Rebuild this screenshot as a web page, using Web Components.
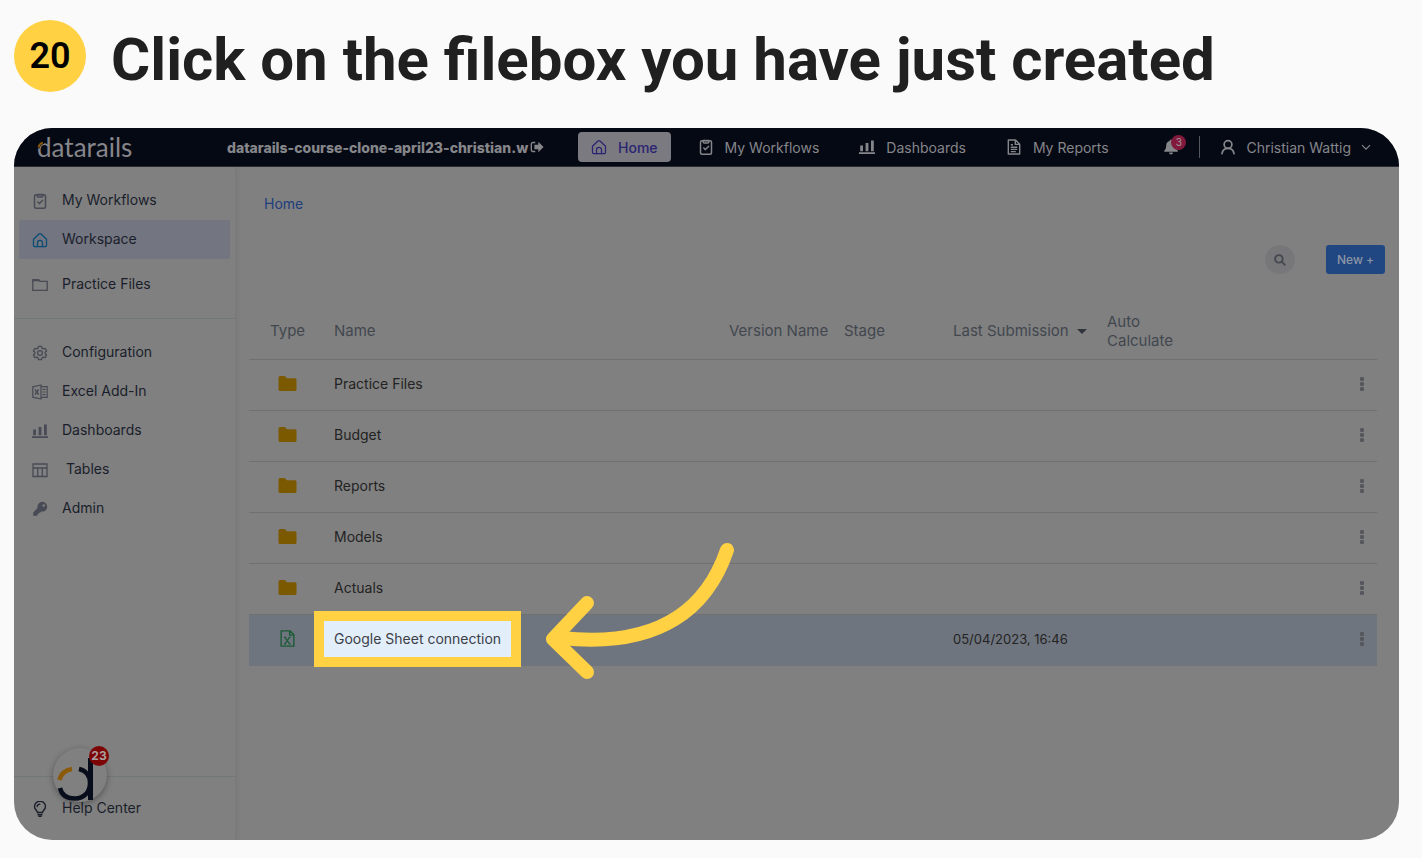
<!DOCTYPE html>
<html lang="en">
<head>
<meta charset="utf-8">
<title>Click on the filebox you have just created</title>
<style>
  body {
    margin: 0;
    box-sizing: border-box;
    min-height: 100vh;
    padding: 20px 23px 18px 14px;
    display: flex;
    flex-direction: column;
    gap: 36px;
    background: #fafafa;
    font-family: Inter, "Open Sans", sans-serif;
    font-size: 14px;
  }
</style>
</head>
<body>
<step-heading number="20">Click on the filebox you have just created</step-heading>
<app-frame>
  <top-bar slot="top"></top-bar>
  <side-bar slot="side"></side-bar>
  <work-space></work-space>
</app-frame>

<script>
const ICONS = {
  clipboard: ['0 0 16 16', '<g fill="none" stroke="currentColor" stroke-width="1.5" stroke-linejoin="round" stroke-linecap="round"><rect x="2.5" y="1.8" width="11" height="13.4" rx="1.5"/><path d="M5.2 1.5h5.6v1.6a1 1 0 0 1-1 1H6.200a1 1 0 0 1-1-1zM5.800 9l1.600 1.600L10.500 7.400"/></g>'],
  home: ['0 0 16 16', '<g fill="none" stroke="currentColor" stroke-width="1.3" stroke-linejoin="round" stroke-linecap="round"><path d="M1.500 7.200 7 2.100a1.500 1.500 0 0 1 2 0l5.500 5.100v6a1.500 1.500 0 0 1-1.500 1.500H3a1.500 1.500 0 0 1-1.500-1.500z"/><path d="M5.500 14.500v-3.700a2.500 2.500 0 0 1 5 0v3.700"/></g>'],
  folderLine: ['0 0 16 16', '<path d="M.8 3.500V13.300h14.400V4.300H8L6.800 2.800H.8z" fill="none" stroke="currentColor" stroke-width="1.300"/><path d="M.5 2.300h6.500l1 2H.5z" fill="currentColor"/>'],
  gear: ['0 0 24 24', '<g fill="none" stroke="currentColor" stroke-width="2"><path stroke-linejoin="round" d="M9.700 2h4.600l.7 2.900 1.700 1 2.900-.9 2.300 4-2.200 2v2l2.200 2-2.300 4-2.900-.9-1.700 1-.7 2.900H9.700L9 19.100l-1.700-1-2.900.9-2.300-4 2.200-2v-2l-2.200-2 2.300-4 2.900.9 1.700-1z"/><circle cx="12" cy="12" r="3.600"/></g>'],
  excel: ['0 0 16 16', '<g fill="none" stroke="currentColor" stroke-width="1.200"><path d="M.8 2.800 9 1v14L.8 13.200z"/><path d="M9 2.600h6.200v10.800H9M10.500 5.300h3M10.500 8h3M10.500 10.700h3"/><path d="m3 5.500 3.600 5M6.600 5.500 3 10.500" stroke-width="1.400"/></g>'],
  bars: ['0 0 16 16', '<path fill="currentColor" d="M0 13.200h16V15H0zM1.200 6.500h2.800v5.800H1.200zM6.600 4h2.800v8.300H6.600zM12 1.500h2.800v10.800H12z"/>'],
  grid: ['0 0 16 16', '<path d="M1 2h14v12.500H1zM1 6h14M5.700 6v8.500M10.300 6v8.500" fill="none" stroke="currentColor" stroke-width="1.300"/>'],
  key: ['0 0 16 16', '<path fill="currentColor" fill-rule="evenodd" d="M10.300.8a4.900 4.900 0 1 1-1 9.700L8 11.800H6.700v1.400H5.300v1.500H1.200v-3.300l4.400-4.600A4.900 4.900 0 0 1 10.300.8zm1.400 2.400a1.300 1.300 0 1 0 0 2.600 1.300 1.300 0 0 0 0-2.600z"/>'],
  bulb: ['0 0 16 16', '<g fill="none" stroke="currentColor" stroke-width="1.400" stroke-linecap="round"><path d="M5.500 11.500c0-2-3-2.800-3-6a5.500 5.200 0 0 1 11 0c0 3.200-3 4-3 6zM6 13.800h4M7 15.500h2M5.200 5.500a2.800 2.600 0 0 1 2.600-2.400"/></g>'],
  report: ['0 0 16 16', '<path d="M2.300 1h7.200l4.200 4.200V15H2.300zM9.300 1v4.400h4.400M4.800 8.200h6.400M4.800 10.400h6.400M4.800 12.600h5M4.800 5.700h2.200" fill="none" stroke="currentColor" stroke-width="1.400" stroke-linejoin="round"/>'],
  exit: ['0 0 16 16', '<path d="M6 2.800H3.200A1.700 1.700 0 0 0 1.500 4.500v7a1.700 1.700 0 0 0 1.700 1.700H6" fill="none" stroke="currentColor" stroke-width="1.600"/><path fill="currentColor" d="M5 5.500h4.500V2.100L15.500 8l-6 5.900V10.500H5z"/>'],
  bell: ['0 0 16 16', '<path fill="currentColor" d="M8 .5a1.200 1.200 0 0 1 1.200 1.200c2.300.6 3.600 2.400 3.600 4.800 0 3.300 1.100 4.200 2 5.200v1H1.200v-1c.9-1 2-1.900 2-5.200 0-2.400 1.300-4.200 3.600-4.800A1.200 1.200 0 0 1 8 .5zM6 13.600h4a2 2 0 0 1-4 0z"/>'],
  user: ['0 0 16 16', '<g fill="none" stroke="currentColor" stroke-width="1.700" stroke-linecap="round"><circle cx="8" cy="5.500" r="3.900"/><path d="M2 14.600c.6-3.400 3-5.200 6-5.200s5.400 1.800 6 5.200"/></g>'],
  chevron: ['0 0 10 10', '<path d="m1 3.200 4 4 4-4" fill="none" stroke="currentColor" stroke-width="1.200"/>'],
  search: ['0 0 12 12', '<g fill="none" stroke="currentColor" stroke-width="1.800"><circle cx="4.900" cy="4.900" r="3.800"/><path d="m7.700 7.700 3.600 3.600"/></g>'],
  folder: ['0 0 18 15', '<path fill="currentColor" d="M1.500 0h4.800l2 2.300h8.200A1.500 1.500 0 0 1 18 3.800v9.700a1.500 1.500 0 0 1-1.500 1.500h-15A1.500 1.500 0 0 1 0 13.500v-12A1.500 1.500 0 0 1 1.500 0z"/>'],
  sheet: ['0 0 14 16', '<path d="M1 .8h8.300L13 4.500v10.700H1zM9 .8v4h4" fill="none" stroke="currentColor" stroke-width="1.300" stroke-linejoin="round"/><path d="m4.500 7 4.500 6M9 7l-4.500 6M3.700 7h2M8 7h2M3.700 13h2M8 13h2" stroke="currentColor" stroke-width="1.100"/>'],
  dots: ['0 0 6 14', '<g fill="currentColor"><rect x="1" width="4" height="4" rx="1.200"/><rect x="1" y="5" width="4" height="4" rx="1.200"/><rect x="1" y="10" width="4" height="4" rx="1.200"/></g>']
};

/* Base class: opens a shadow root and fills it with the element's markup. */
class Part extends HTMLElement {
  connectedCallback() {
    if (this.shadowRoot) return;
    const t = document.createElement('template');
    t.innerHTML = '<style>:host,*{box-sizing:border-box}' + this.css() + '</style>' + this.html();
    this.attachShadow({ mode: 'open' }).append(t.content);
  }
}

customElements.define('ui-icon', class extends Part {
  css() {
    return `:host{display:inline-block;width:16px;height:16px;flex:none}
      svg{display:block;width:100%;height:100%}`;
  }
  html() {
    const [box, shape] = ICONS[this.getAttribute('name')];
    return `<svg viewBox="${box}" aria-hidden="true">${shape}</svg>`;
  }
});

customElements.define('step-heading', class extends Part {
  css() {
    return `:host{display:flex;align-items:center;gap:25px;height:72px;font-family:Roboto,sans-serif}
      .n{flex:none;width:72px;height:72px;border-radius:50%;background:#ffd143;color:#000;
         display:grid;place-items:center;font-size:36px;font-weight:600}
      h1{margin:0;padding-top:8px;font-size:60px;line-height:64px;font-weight:700;color:#202020}`;
  }
  html() { return `<span class="n">${this.getAttribute('number')}</span><h1><slot></slot></h1>`; }
});

customElements.define('app-frame', class extends Part {
  css() {
    return `:host{flex:1;display:grid;grid-template:auto 1fr / 222px 1fr;border-radius:38px;overflow:hidden;
        background:#808080;color:#1a1e2b}
      slot[name=top]::slotted(*){grid-column:1 / -1}`;
  }
  html() { return `<slot name="top"></slot><slot name="side"></slot><slot></slot>`; }
});

customElements.define('brand-logo', class extends Part {
  css() {
    return `:host{display:block;position:relative;width:100px;height:28px;color:#85858a;
        font:400 26px/28px Lato,sans-serif}
      svg{position:absolute;left:0;top:0}`;
  }
  html() {
    return `<span>datarails</span><svg width="100" height="28" viewBox="0 0 100 28" fill="none" aria-hidden="true">
      <path d="M0 15C1 11 3 9 7 8" stroke="#050914" stroke-width="5"/>
      <path d="M1.500 14.500C2 11.800 3.500 10.300 5.800 9.600" stroke="#8a5a08" stroke-width="1.800"/></svg>`;
  }
});

customElements.define('nav-item', class extends Part {
  css() {
    return `:host{display:block}
      a{display:flex;align-items:center;gap:11px;height:30px;padding:0 13px;border-radius:4px;
        color:#85868a;text-decoration:none;white-space:nowrap}
      :host([active]) a{background:#7b7a80;color:#2a2471;font-weight:500}`;
  }
  html() { return `<a href="#"><ui-icon name="${this.getAttribute('icon')}"></ui-icon><slot></slot></a>`; }
});

customElements.define('top-bar', class extends Part {
  css() {
    return `:host{display:grid;grid-template-columns:190px 351px 1fr auto;align-items:center;height:39px;
        padding:0 28px 0 23px;background:#050914;border-bottom:1px solid #2a2c33;color:#85868a}
      .org{display:flex;align-items:center;gap:2px;font-size:14px;font-weight:800;white-space:nowrap}
      .org ui-icon{width:14px;height:14px}
      nav{display:flex;gap:14px}
      .right{display:flex;align-items:center}
      button{font:inherit;color:inherit;background:none;border:0;padding:0;display:flex;align-items:center}
      .bell{position:relative;width:37px;height:22px;border-right:1px solid #55575c}
      .badge{position:absolute;left:8px;top:-1px;width:15px;height:15px;border-radius:50%;background:#82193c;
        color:#a09a9c;font-size:10px;line-height:15px;text-align:center}
      .user{gap:10px;margin-left:20px;white-space:nowrap}
      .user ui-icon:last-child{width:10px;height:10px}`;
  }
  html() {
    return `<brand-logo></brand-logo>
      <span class="org">datarails-course-clone-april23-christian.w<ui-icon name="exit"></ui-icon></span>
      <nav>
        <nav-item icon="home" active>Home</nav-item>
        <nav-item icon="clipboard">My Workflows</nav-item>
        <nav-item icon="bars">Dashboards</nav-item>
        <nav-item icon="report">My Reports</nav-item>
      </nav>
      <div class="right">
        <button class="bell" aria-label="Notifications"><ui-icon name="bell"></ui-icon><span class="badge">3</span></button>
        <button class="user"><ui-icon name="user"></ui-icon>Christian Wattig<ui-icon name="chevron"></ui-icon></button>
      </div>`;
  }
});

customElements.define('side-item', class extends Part {
  css() {
    return `:host{display:block;margin:0 5px}
      a{display:flex;align-items:center;gap:14px;height:39px;padding:0 13px;border-radius:2px;
        color:#1a1e2b;text-decoration:none;white-space:pre}
      ui-icon{color:var(--icon,#484a55)}
      span{padding-bottom:2px}
      :host([active]) a{background:#737580}
      :host([active]) ui-icon{color:#0a4c73}`;
  }
  html() { return `<a href="#"><ui-icon name="${this.getAttribute('icon')}"></ui-icon><span><slot></slot></span></a>`; }
});

customElements.define('chat-launcher', class extends Part {
  css() {
    return `:host{display:block;width:54px;height:54px}
      button{position:relative;width:54px;height:54px;padding:0;border:0;border-radius:50%;background:#808080;
        box-shadow:0 2px 6px rgba(0,0,0,.35)}
      svg{display:block}
      .badge{position:absolute;right:-2px;top:-2px;width:20px;height:20px;border-radius:50%;background:#7d0404;
        color:#a8a0a0;font:700 12px/20px Inter,sans-serif;text-align:center}`;
  }
  html() {
    return `<button aria-label="Open chat"><svg width="54" height="54" viewBox="0 0 54 54" fill="none">
      <path d="M6.500 32C8 26 12 22 19 21" stroke="#8a5a08" stroke-width="4.500"/>
      <path d="M26 21c7 1.500 11 7 11 14 0 9-6 15.500-15 15.500C14 50.500 8.500 47 7 40" stroke="#080d1c" stroke-width="4.500"/>
      <path d="M37.500 10v42" stroke="#080d1c" stroke-width="5"/></svg><span class="badge">23</span></button>`;
  }
});

customElements.define('side-bar', class extends Part {
  css() {
    return `:host{position:relative;display:flex;flex-direction:column;border-right:1px solid #7a7a7a;
        box-shadow:2px 0 4px rgba(0,0,0,.05)}
      nav{padding:14px 0}
      nav + nav{border-top:1px solid #72777a}
      side-item.gap{margin-top:6px}
      footer{margin-top:auto;height:64px;padding-top:12px;border-top:1px solid #72777a;--icon:#1a1e2b}
      chat-launcher{position:absolute;left:39px;bottom:38px}`;
  }
  html() {
    return `<nav>
        <side-item icon="clipboard">My Workflows</side-item>
        <side-item icon="home" active>Workspace</side-item>
        <side-item icon="folderLine" class="gap">Practice Files</side-item>
      </nav>
      <nav>
        <side-item icon="gear">Configuration</side-item>
        <side-item icon="excel">Excel Add-In</side-item>
        <side-item icon="bars">Dashboards</side-item>
        <side-item icon="grid">&nbsp;Tables</side-item>
        <side-item icon="key">Admin</side-item>
      </nav>
      <footer><side-item icon="bulb">Help Center</side-item></footer>
      <chat-launcher></chat-launcher>`;
  }
});

/* Bright frame round its content, with an arrow that points at it. */
customElements.define('call-out', class extends Part {
  css() {
    return `:host{position:relative;display:inline-block}
      .box{position:absolute;inset:-18px -20px;border:10px solid #ffd143;background:#e2eefa}
      .text{position:relative;color:#3c4047}
      svg{position:absolute;left:calc(100% + 44px);top:-87px;overflow:visible}`;
  }
  html() {
    return `<span class="box"></span><span class="text"><slot></slot></span>
      <svg width="192" height="140" viewBox="0 0 192 140" fill="none" stroke="#ffd143" stroke-width="14"
        stroke-linecap="round" stroke-linejoin="round" aria-hidden="true">
        <path d="M182 8C163 64 117 107 16 96"/><path d="M42 61 8 97l34 33"/></svg>`;
  }
});

customElements.define('file-table', class extends Part {
  css() {
    return `:host{display:block}
      table{width:100%;border-collapse:collapse;table-layout:fixed}
      th{height:54px;font-size:15px;line-height:19px;font-weight:400;color:#42474f;text-align:left}
      td{height:51px;font-size:13px;line-height:20px;color:#232323}
      th,td{padding:0 0 2px;border-bottom:1px solid #707070;white-space:nowrap}
      .type{width:85px} .version{width:115px} .stage{width:109px} .last{width:154px}
      .auto{width:90px;white-space:normal} .menu{width:180px}
      td.name{font-size:14px}
      th.type{padding-left:21px}
      td.type{padding-left:29px}
      td.menu{padding-right:12px}
      .type ui-icon{display:block;width:19px;height:15px;color:#7b5900}
      .type ui-icon[name=sheet]{width:19px;height:17px;color:#1b5a35}
      .menu button{display:block;margin-left:auto;padding:0;border:0;background:none;color:#55575c}
      .menu ui-icon{display:block;width:6px;height:14px}
      tr.on td{background:#6f757e;border-color:#6f757e}
      .sort{display:inline-block;margin-left:8px;vertical-align:2px;border:5px solid transparent;border-top-color:#30343c;border-bottom:0}`;
  }
  html() {
    const row = (name, icon, date) => `<tr${date ? ' class="on"' : ''}>
      <td class="type"><ui-icon name="${icon}"></ui-icon></td>
      <td class="name">${date ? `<call-out>${name}</call-out>` : name}</td><td></td><td></td><td>${date}</td><td></td>
      <td class="menu"><button aria-label="Actions for ${name}"><ui-icon name="dots"></ui-icon></button></td></tr>`;
    const folders = ['Practice Files', 'Budget', 'Reports', 'Models', 'Actuals'];
    return `<table><thead><tr><th class="type">Type</th><th>Name</th><th class="version">Version Name</th>
      <th class="stage">Stage</th><th class="last">Last Submission<span class="sort"></span></th>
      <th class="auto">Auto Calculate</th><th class="menu"></th></tr></thead>
      <tbody>${folders.map(f => row(f, 'folder', '')).join('')}${row('Google Sheet connection', 'sheet', '05/04/2023, 16:46')}</tbody></table>`;
  }
});

customElements.define('work-space', class extends Part {
  css() {
    return `:host{display:block;padding:27px 22px 27px 13px}
      .crumb{display:block;padding-left:15px;font-size:14px;line-height:20px;color:#213e7d;text-decoration:none}
      .tools{display:flex;justify-content:flex-end;align-items:center;gap:31px;margin:31px -8px 31px 0}
      button{border:0;padding:0;font:inherit;display:grid;place-items:center}
      .find{width:30px;height:29px;border-radius:50%;background:#77777a;color:#43474f}
      .find ui-icon{width:12px;height:12px}
      .new{width:59px;height:29px;border-radius:3px;background:#204782;color:#8d96a5;font-size:12px;font-weight:500}`;
  }
  html() {
    return `<a class="crumb" href="#">Home</a>
      <div class="tools"><button class="find" aria-label="Search"><ui-icon name="search"></ui-icon></button>
        <button class="new">New +</button></div>
      <file-table></file-table>`;
  }
});
</script>
</body>
</html>
